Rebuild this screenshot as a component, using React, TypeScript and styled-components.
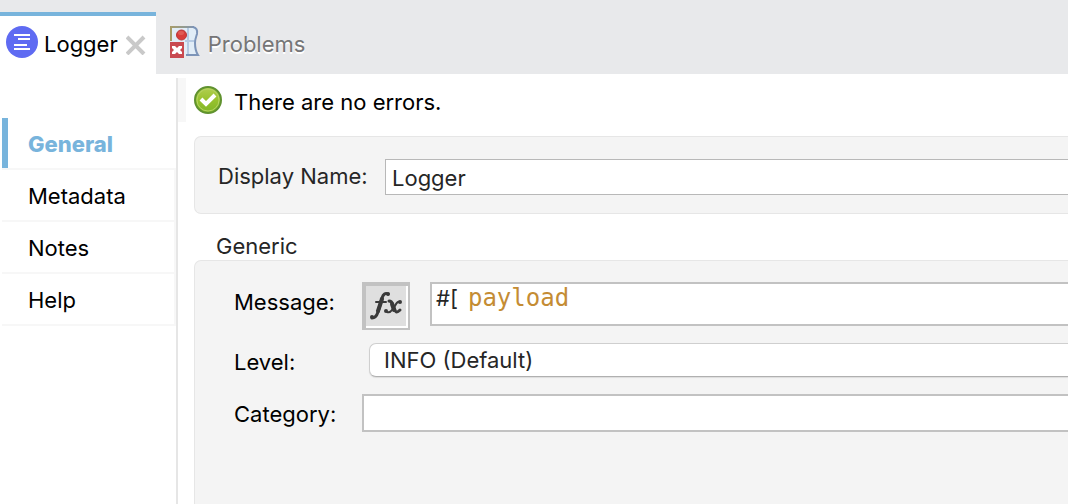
import React from "react";
import styled, { createGlobalStyle } from "styled-components";

const GlobalStyle = createGlobalStyle`
  * { box-sizing: border-box; }
  body {
    margin: 0;
    background: #ffffff;
    color: #000000;
    font-family: Inter, "Liberation Sans", sans-serif;
    font-size: 22px;
    line-height: 40px;
  }
  button, input, select { font: inherit; color: inherit; margin: 0; }
`;

const Page = styled.div`
  min-height: 100vh;
  display: flex;
  flex-direction: column;
`;

const TabBar = styled.header`
  display: flex;
  padding-top: 12px;
  background: #e8e9eb;
`;

const Tab = styled.div<{ $active?: boolean }>`
  display: flex;
  align-items: center;
  height: 62px;
  padding: ${(p) => (p.$active ? "0 10px 6px 6px" : "0 14px 6px")};
  gap: 8px;
  border-top: 4px solid ${(p) => (p.$active ? "#78b4dc" : "transparent")};
  background: ${(p) => (p.$active ? "#ffffff" : "transparent")};
`;

const TabLabel = styled.button<{ $muted?: boolean }>`
  display: flex;
  align-items: center;
  gap: 6px;
  padding: 0;
  border: 0;
  background: none;
  white-space: nowrap;
  color: ${(p) => (p.$muted ? "#767677" : "#000000")};
  text-shadow: ${(p) => (p.$muted ? "0 2px 0 #ffffff" : "none")};
`;

const TabText = styled.span`
  padding-top: 4px;
`;

const CloseButton = styled.button`
  display: flex;
  padding: 6px 0 0;
  border: 0;
  background: none;
`;

const Body = styled.div`
  flex: 1;
  display: flex;
  padding-top: 4px;
`;

const Sidebar = styled.nav`
  flex: 0 0 178px;
  padding: 40px 0 0 2px;
  border-right: 2px solid #e6e6e6;
`;

const SideLink = styled.a<{ $active?: boolean }>`
  display: block;
  height: 52px;
  padding-left: 26px;
  line-height: 52px;
  text-decoration: none;
  color: ${(p) => (p.$active ? "#78b4dc" : "#000000")};
  font-weight: ${(p) => (p.$active ? 800 : 400)};
  background: ${(p) =>
    p.$active ? "linear-gradient(#78b4dc, #78b4dc) 0 0 / 6px 50px no-repeat" : "none"};
  border-right: ${(p) => (p.$active ? "0" : "2px solid #f7f7f7")};
  box-shadow: inset 0 -2px 0 #f7f7f7;
`;

const Content = styled.main`
  flex: 1;
  min-width: 0;
  display: flex;
  flex-direction: column;
`;

const Status = styled.div`
  display: flex;
  align-items: center;
  gap: 12px;
  height: 44px;
  padding-left: 8px;
  border-left: 8px solid #f7f7f7;
  white-space: nowrap;
`;

const StatusText = styled.span`
  padding-top: 4px;
`;

const Panel = styled.section<{ $fill?: boolean }>`
  flex: ${(p) => (p.$fill ? "1" : "none")};
  margin-left: 16px;
  padding: ${(p) => (p.$fill ? "21px 0 21px 39px" : "22px 0 18px 23px")};
  display: flex;
  flex-direction: column;
  gap: 12px;
  background: #f4f4f4;
  border: 1px solid #e6e6e6;
  border-width: ${(p) => (p.$fill ? "1px 0 0 1px" : "1px 0 1px 1px")};
  border-radius: ${(p) => (p.$fill ? "7px 0 0 0" : "7px 0 0 7px")};
`;

const FirstPanel = styled(Panel)`
  margin-top: 14px;
  color: #262626;
`;

const PanelTitle = styled.h2`
  margin: 18px 0 0 38px;
  font-size: 22px;
  font-weight: 400;
  line-height: 28px;
  color: #262626;
`;

const Row = styled.div<{ $label?: number }>`
  display: grid;
  grid-template-columns: ${(p) => p.$label ?? 128}px minmax(0, 1fr);
  align-items: start;
`;

const Label = styled.label`
  white-space: nowrap;
`;

const NameLabel = styled(Label)`
  line-height: 34px;
`;

const NameInput = styled.input`
  width: 100%;
  height: 36px;
  padding: 2px 6px 0;
  border: 1px solid #b8b8b8;
  border-right: 0;
  border-radius: 0;
  background: #ffffff;
`;

const MessageField = styled.div`
  display: flex;
  gap: 20px;
`;

const FxButton = styled.button`
  flex: 0 0 48px;
  height: 48px;
  padding: 0;
  border: 2px solid #c2c2c2;
  background: #dfdfdf;
  box-shadow: inset 2px 2px 0 #c2c2c2, inset -2px -2px 0 #ffffff;
`;

const Expression = styled.div`
  flex: 1;
  min-width: 0;
  height: 44px;
  display: flex;
  padding-left: 4px;
  gap: 10px;
  border: 2px solid #c2c2c2;
  border-right: 0;
  background: #ffffff;
  color: #262626;
  line-height: 28px;
`;

const ExpressionInput = styled.input`
  flex: 1;
  min-width: 0;
  height: 28px;
  padding: 0;
  border: 0;
  outline: 0;
  background: none;
  color: #c48c34;
  font-family: "DejaVu Sans Mono", monospace;
  font-size: 24px;
`;

const LevelSelect = styled.select`
  appearance: none;
  height: 34px;
  margin: 1px 0 0 7px;
  padding: 0 14px;
  border: 1px solid #cfcfcf;
  border-width: 1px 0 1px 1px;
  border-bottom-color: #b0b0b0;
  border-radius: 7px 0 0 7px;
  background: #ffffff;
  color: #262626;
  line-height: 32px;
  box-shadow: 0 1px 1px #dddddd;
`;

const CategoryInput = styled.input`
  width: 100%;
  height: 38px;
  padding: 0 6px;
  border: 2px solid #c2c2c2;
  border-right: 0;
  border-radius: 0;
  background: #ffffff;
`;

const LoggerIcon = () => (
  <svg width="32" height="32" viewBox="0 0 32 32" aria-hidden="true">
    <circle cx="16" cy="16" r="16" fill="#5f6bf2" />
    <path d="M8 9h16M12 13h12M8 19h13M8 23h16" stroke="#fff" strokeWidth="2" />
  </svg>
);

const CloseIcon = () => (
  <svg width="20" height="20" viewBox="0 0 20 20" aria-hidden="true">
    <path d="M1 2l17 17M18 2L1 19" stroke="#c9c9c9" strokeWidth="4" />
  </svg>
);

const ProblemsIcon = () => (
  <svg width="32" height="32" viewBox="0 0 32 32" aria-hidden="true">
    <defs>
      <linearGradient id="rim" x1="0" x2="1">
        <stop offset="0" stopColor="#a89c68" />
        <stop offset="0.6" stopColor="#929a91" />
        <stop offset="1" stopColor="#8094b4" />
      </linearGradient>
    </defs>
    <path d="M1 1h23q4 2 3 7c-1 3-2 5-2 9 0 5 1 9 3 12H16L1 16z" fill="#e1edf7" />
    <path d="M15 15h10M18 2v26" stroke="#b6cbe4" strokeWidth="2" fill="none" />
    <path d="M1 15V1" fill="none" stroke="#a89c68" strokeWidth="2" />
    <path d="M0 0h24v2H0z" fill="url(#rim)" />
    <path d="M23 1q5 1 4 7c-1 3-2 5-2 9 0 5 1 9 3 12H16" fill="none" stroke="#7c94b8" strokeWidth="2" />
    <circle cx="11.5" cy="9" r="5" fill="#d93d3b" stroke="#b8363a" strokeWidth="1" />
    <ellipse cx="11" cy="7" rx="3" ry="2" fill="#e05a55" />
    <path d="M0 16h14v16H0z" fill="#c94a50" />
    <path d="M2 20h3l2 2 2-2h3v2l-2 2 2 2v2H9l-2-2-2 2H2v-2l2-2-2-2z" fill="#fff" />
  </svg>
);

const OkIcon = () => (
  <svg width="28" height="28" viewBox="0 0 28 28" aria-hidden="true">
    <defs>
      <linearGradient id="okFill" x2="0" y2="1">
        <stop offset="0" stopColor="#b3cf52" />
        <stop offset="0.5" stopColor="#98c22e" />
        <stop offset="1" stopColor="#7fb526" />
      </linearGradient>
    </defs>
    <circle cx="14" cy="14" r="13" fill="url(#okFill)" stroke="#60922f" strokeWidth="2" />
    <circle cx="14" cy="14" r="11" fill="none" stroke="#b5d364" strokeWidth="1" />
    <path d="M7 13l5 5L21 9" fill="none" stroke="#fff" strokeWidth="4" />
  </svg>
);

const FxIcon = () => (
  <svg width="44" height="44" viewBox="0 0 44 44" aria-hidden="true">
    <g fill="none" stroke="#3a3a3a" strokeLinecap="round" strokeLinejoin="round">
      <path d="M24 10q-4-2-6 4l-4 14q-2 6-6 6" strokeWidth="3" />
      <path d="M18 15l-4 12" strokeWidth="4" />
      <path d="M12 18h10" strokeWidth="2" />
      <path d="M25 17q3 0 4 4l2 5q1 4 5 0" strokeWidth="3" />
      <path d="M28 20l2 6" strokeWidth="4" />
      <path d="M36 18q-3-1-5 4l-3 4q-2 3-5 2" strokeWidth="2" />
    </g>
    <g fill="#3a3a3a">
      <circle cx="24" cy="10" r="2" />
      <circle cx="8" cy="33" r="2" />
      <circle cx="36" cy="18" r="2" />
      <circle cx="22" cy="27" r="2" />
    </g>
  </svg>
);

export default function App() {
  return (
    <Page>
      <GlobalStyle />
      <TabBar>
        <Tab $active>
          <TabLabel>
            <LoggerIcon />
            <TabText>Logger</TabText>
          </TabLabel>
          <CloseButton aria-label="Close">
            <CloseIcon />
          </CloseButton>
        </Tab>
        <Tab>
          <TabLabel $muted>
            <ProblemsIcon />
            <TabText>Problems</TabText>
          </TabLabel>
        </Tab>
      </TabBar>
      <Body>
        <Sidebar>
          <SideLink href="#general" $active>General</SideLink>
          <SideLink href="#metadata">Metadata</SideLink>
          <SideLink href="#notes">Notes</SideLink>
          <SideLink href="#help">Help</SideLink>
        </Sidebar>
        <Content>
          <Status>
            <OkIcon />
            <StatusText>There are no errors.</StatusText>
          </Status>
          <FirstPanel>
            <Row $label={167}>
              <NameLabel htmlFor="name">Display Name:</NameLabel>
              <NameInput id="name" defaultValue="Logger" />
            </Row>
          </FirstPanel>
          <PanelTitle>Generic</PanelTitle>
          <Panel $fill>
            <Row>
              <Label htmlFor="message">Message:</Label>
              <MessageField>
                <FxButton aria-label="Expression mode">
                  <FxIcon />
                </FxButton>
                <Expression>
                  <span>#[</span>
                  <ExpressionInput id="message" defaultValue="payload" spellCheck={false} />
                </Expression>
              </MessageField>
            </Row>
            <Row>
              <Label htmlFor="level">Level:</Label>
              <LevelSelect id="level" defaultValue="INFO">
                <option value="INFO">INFO (Default)</option>
              </LevelSelect>
            </Row>
            <Row>
              <Label htmlFor="category">Category:</Label>
              <CategoryInput id="category" />
            </Row>
          </Panel>
        </Content>
      </Body>
    </Page>
  );
}
